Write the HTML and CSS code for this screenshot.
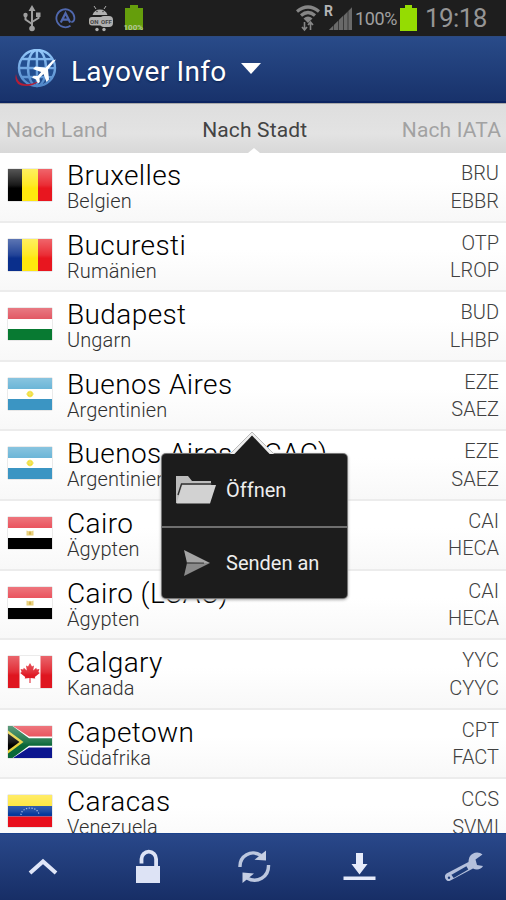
FILE: index.html
```
<!DOCTYPE html>
<html lang="de">
<head>
<meta charset="utf-8">
<title>Layover Info</title>
<link rel="stylesheet" href="styles.css">
</head>
<body>
<svg class="defs" width="0" height="0">
  <defs>
    <linearGradient id="gloss" x1="0" y1="0" x2="0" y2="1">
      <stop offset="0" stop-color="#fff" stop-opacity=".34"/>
      <stop offset=".5" stop-color="#fff" stop-opacity=".1"/>
      <stop offset=".6" stop-color="#fff" stop-opacity="0"/>
    </linearGradient>
    <linearGradient id="globe" x1="0" y1="0" x2="0" y2="1">
      <stop offset="0" stop-color="#94c8fa"/><stop offset="1" stop-color="#4f86c8"/>
    </linearGradient>
    <symbol id="be" viewBox="0 0 44 32"><path fill="#000" d="M0 0h15v32H0z"/><path fill="#ffe70d" d="M14 0h16v32H14z"/><path fill="#e8161f" d="M30 0h14v32H30z"/></symbol>
    <symbol id="ro" viewBox="0 0 44 32"><path fill="#0a2f8c" d="M0 0h15v32H0z"/><path fill="#ffe70d" d="M14 0h16v32H14z"/><path fill="#e8161f" d="M30 0h14v32H30z"/></symbol>
    <symbol id="hu" viewBox="0 0 44 32"><path fill="#fff" d="M0 0h44v32H0z"/><path fill="#dc3543" d="M0 0h44v11H0z"/><path fill="#087a32" d="M0 21h44v11H0z"/></symbol>
    <symbol id="ar" viewBox="0 0 44 32"><path fill="#fff" d="M0 0h44v32H0z"/><path fill="#4ca6cf" d="M0 0h44v11H0z"/><path fill="#3b95c3" d="M0 21h44v11H0z"/><circle cx="22" cy="16" r="3" fill="#f0dc18"/><path stroke="#eee06a" d="M18 16h8M22 12.500v7"/></symbol>
    <symbol id="eg" viewBox="0 0 44 32"><path fill="#fff" d="M0 0h44v32H0z"/><path fill="#e52f3b" d="M0 0h44v11H0z"/><path d="M0 21h44v11H0z"/><path fill="#e6cc72" d="M18.500 13.500l3 1 .5-1 .5 1 3-1v5h-7z"/><path fill="#cda93a" d="M21 14.500h2v3h-2z"/></symbol>
    <symbol id="ca" viewBox="0 0 44 32"><path fill="#fff" d="M0 0h44v32H0z"/><path fill="#df1620" d="M0 0h11.500v32H0zM32.500 0H44v32H32.500z"/><path fill="#e01b26" d="M22 7l2 3.500 2-1-.8 5 3-2.700.6 1.700 2.600-.4-1 3 1.400.9-5 4 .5 1.500-4.800-.6V27h-1v-5.100l-4.800.6.5-1.500-5-4 1.400-.9-1-3 2.600.4.600-1.700 3 2.700-.8-5 2 1z"/></symbol>
    <symbol id="za" viewBox="0 0 44 32"><path fill="#fff" d="M0 0h44v32H0z"/><path fill="#e5303b" d="M5 0h39v10.500H21z"/><path fill="#0c168f" d="M5 32h39V21.500H21z"/><path fill="#0a6838" d="M0 0h4.500L21 12.300h23v7.400H21L4.500 32H0z"/><path fill="#e8d23c" d="M0 4.500L15.500 16 0 27.500z"/><path d="M0 7.500L11.500 16 0 24.500z"/></symbol>
    <symbol id="ve" viewBox="0 0 44 32"><path fill="#ffe21c" d="M0 0h44v11H0z"/><path fill="#073a9c" d="M0 11h44v10.500H0z"/><path fill="#e80f1c" d="M0 21.500h44V32H0z"/><path d="M13 20a9 7 0 0 1 18 0" fill="none" stroke="#9fb4e0" stroke-width="1.200" stroke-dasharray="1.300 1.500"/></symbol>
    <symbol id="shine" viewBox="0 0 44 32"><path fill="url(#gloss)" d="M0 0h44v32H0z"/></symbol>
  </defs>
</svg>
<div class="phone">
  <div class="status">
    <div class="status-left">
      <svg width="18" height="27" viewBox="0 0 18 27" fill="none" stroke="#a0a0a0" stroke-width="2"><path d="M9 4v19M2.500 10v4.500L9 19M15.500 10v3L9 17"/><path fill="#a0a0a0" stroke="none" d="M9 0l3.500 6h-7zM13 7.500h4.500V12H13z"/><circle cx="2.500" cy="10" r="2.200" fill="#a0a0a0" stroke="none"/><circle cx="9" cy="23.500" r="2.800" fill="#a0a0a0" stroke="none"/></svg>
      <svg class="at" width="21" height="21" viewBox="0 0 21 21" fill="none" stroke="#5068ae" stroke-width="1.800"><path d="M15.500 17.700A9 9 0 1 1 19.300 9q.5 5-3 5"/><path stroke-width="2.200" d="M5.800 14.500l4.700-9.300 4.700 9.300M7.500 11.700h6"/></svg>
      <svg class="droid" width="25" height="27" viewBox="0 0 25 27"><g fill="#b0b0b0"><path d="M3.500 10a8 8.500 0 0 1 15 0z"/><path d="M5 1l2 3M17 1l-2 3" stroke="#b0b0b0"/><rect y="12" width="15" height="8.500" rx="3"/><rect x="11" y="11" width="13" height="11" rx="4"/><circle cx="8" cy="24.500" r="1.700"/><circle cx="15" cy="24.500" r="1.700"/></g><circle cx="8" cy="6.500" r=".8" fill="#444"/><circle cx="14" cy="6.500" r=".8" fill="#444"/><text x="1" y="19" class="tiny-dark">ON</text><text x="12" y="18.500" class="tiny-dark">OFF</text></svg>
      <svg class="batt" width="22" height="27" viewBox="0 0 22 27"><path fill="#659e0c" d="M7 0h8v3h5v22H2V3h5z"/><text x="0.500" y="25" class="tiny-light">100%</text></svg>
    </div>
    <div class="status-right">
      <svg class="wifi" width="24" height="27" viewBox="0 0 24 27" fill="none" stroke="#868686" stroke-width="3.200"><path d="M1 6.500q11-9 22 0M5 10.500q7-6 14 0"/><path stroke="none" fill="#868686" d="M7.500 13.500q4.500-4 9 0L12 18z"/><path stroke-width="1.600" d="M8.500 17v8M6 22l2.500 3 2.500-3M14.500 25v-8M12 20l2.500-3 2.500 3"/></svg>
      <svg class="signal" width="29" height="26" viewBox="0 0 29 26"><text x="0" y="11" class="roam">R</text><path fill="#7c7c7c" d="M5 25l4-4v4zM10 20l4-4v9h-4zM15 15l4-4v14h-4zM20 10.500l3.500-3.500v18H20zM24.500 6L28 2.500V25h-3.500z"/><path fill="#555" d="M5 25L28 2v23z" opacity=".5"/></svg>
      <span class="pct">100%</span>
      <svg class="full" width="17" height="26" viewBox="0 0 17 26"><path fill="#95dc02" d="M5 0h7v3h5v23H0V3h5z"/></svg>
      <span class="clock">19:18</span>
    </div>
  </div>
  <div class="titlebar">
    <svg class="logo" width="44" height="40" viewBox="0 0 44 40"><g fill="none" stroke="url(#globe)" stroke-width="2.400"><circle cx="23" cy="19" r="18" fill="#234f91"/><ellipse cx="23" cy="19" rx="9" ry="18"/><path d="M22.900 1L23 37M5 19L41 19.100M8 10L38 10.100M8 28L38 28.100"/></g><path d="M2 25q-3 12 10 12 8 0 13-5-9 4-15 3-7-1-8-10z" fill="#b51d36"/><path fill="#fff" d="M42 10.500l-8 10 1 10-2.500 2.500-3-8-4 4 .3 4-1.800 1.500-2-4-4-2 1.700-1.800 4 .3 3.500-4-8.200-3 2.500-2.600 10 1.300 7-7.200z"/></svg>
    <span class="apptitle">Layover Info</span>
    <svg class="caret" width="20" height="11" viewBox="0 0 20 11"><path fill="#fff" d="M0 0h20L10 11z"/></svg>
  </div>
  <div class="tabs"><span>Nach Land</span><span class="active">Nach Stadt</span><span>Nach IATA</span></div>
  <div class="list">
    <div class="row"><svg class="flag"><use href="#be"/><use href="#shine"/></svg><div class="place"><b>Bruxelles</b><i>Belgien</i></div><div class="codes"><span>BRU</span><span>EBBR</span></div></div>
    <div class="row"><svg class="flag"><use href="#ro"/><use href="#shine"/></svg><div class="place"><b>Bucuresti</b><i>Rumänien</i></div><div class="codes"><span>OTP</span><span>LROP</span></div></div>
    <div class="row"><svg class="flag"><use href="#hu"/><use href="#shine"/></svg><div class="place"><b>Budapest</b><i>Ungarn</i></div><div class="codes"><span>BUD</span><span>LHBP</span></div></div>
    <div class="row"><svg class="flag"><use href="#ar"/><use href="#shine"/></svg><div class="place"><b>Buenos Aires</b><i>Argentinien</i></div><div class="codes"><span>EZE</span><span>SAEZ</span></div></div>
    <div class="row"><svg class="flag"><use href="#ar"/><use href="#shine"/></svg><div class="place"><b>Buenos Aires (LCAC)</b><i>Argentinien</i></div><div class="codes"><span>EZE</span><span>SAEZ</span></div></div>
    <div class="row"><svg class="flag"><use href="#eg"/><use href="#shine"/></svg><div class="place"><b>Cairo</b><i>Ägypten</i></div><div class="codes"><span>CAI</span><span>HECA</span></div></div>
    <div class="row"><svg class="flag"><use href="#eg"/><use href="#shine"/></svg><div class="place"><b>Cairo (LCAC)</b><i>Ägypten</i></div><div class="codes"><span>CAI</span><span>HECA</span></div></div>
    <div class="row"><svg class="flag"><use href="#ca"/><use href="#shine"/></svg><div class="place"><b>Calgary</b><i>Kanada</i></div><div class="codes"><span>YYC</span><span>CYYC</span></div></div>
    <div class="row"><svg class="flag"><use href="#za"/><use href="#shine"/></svg><div class="place"><b>Capetown</b><i>Südafrika</i></div><div class="codes"><span>CPT</span><span>FACT</span></div></div>
    <div class="row"><svg class="flag"><use href="#ve"/><use href="#shine"/></svg><div class="place"><b>Caracas</b><i>Venezuela</i></div><div class="codes"><span>CCS</span><span>SVMI</span></div></div>
  </div>
  <div class="toolbar">
    <div><svg width="30" height="36" viewBox="0 0 30 36"><path d="M2 24l13-11.500L28 24" fill="none" stroke="#e0e6f8" stroke-width="4"/></svg></div>
    <div><svg width="30" height="36" viewBox="0 0 30 36"><path fill="#dde3f5" d="M3 17h24v17H3z"/><path d="M8.500 14.500V10a7.300 7.300 0 0 1 14.600 0V17" fill="none" stroke="#dde3f5" stroke-width="3.800"/></svg></div>
    <div><svg width="34" height="36" viewBox="0 0 34 36"><g fill="none" stroke="#bcc7df" stroke-width="3.400"><path d="M3 18C2.500 7 14 0 24 6.500"/><path d="M31.500 16C32 28 20 35 10 29"/></g><path fill="#c6cfe4" d="M29 1.500V11.500L17.500 10.800zM5.500 34V23.500L17 24.500z"/></svg></div>
    <div><svg width="34" height="36" viewBox="0 0 34 36"><path fill="#e6ebfa" d="M14 4h7v11h4.500l-8 10.500-8-10.500H14zM1.500 27.500h32V31h-32z"/></svg></div>
    <div><svg width="40" height="36" viewBox="0 0 40 36"><path d="M38.500 5.500C35 2 28 3 25.500 8c-1 2.500-1 5-1 5L2.500 24.500C-1 27 2 33 5.500 32L29 19.500c3.500 2 8.500 1 10-2.500l-6-1-1.500-5.500z" fill="#b4c0dc"/><path d="M9 26.200L22 18.800l.8 1.400L10 27.500z" fill="#1d3b78" stroke="#1d3b78" stroke-width="2.200"/><circle cx="5" cy="28.700" r="1.200" fill="#1d3b78"/></svg></div>
  </div>
  <div class="popup">
    <svg class="pointer" width="44" height="26" viewBox="0 0 44 26"><path d="M0 24L22 2l22 22" fill="#eee" stroke="#bbb" stroke-width="1"/><path fill="#1c1c1c" d="M2.500 26L22 5.500l19.500 20.500z"/></svg>
    <div class="item"><svg width="42" height="30" viewBox="0 0 42 30"><path fill="#bdbdbd" d="M1 1h12l4 5h19v5L32 28H1z"/><path d="M3 20L6.500 9H37" fill="none" stroke="#303030" stroke-width="1.400"/><path fill="#d2d2d2" d="M7.500 10H41l-6 18.500H1.500z"/></svg><span>Öffnen</span></div>
    <div class="item"><svg width="42" height="30" viewBox="0 0 42 30"><path fill="#a5a5a5" d="M9 2l26 13H12z"/><path fill="#8a8a8a" d="M12 15h23L9 28z"/><path stroke="#444" stroke-width="1.400" d="M12 15l17 .1"/></svg><span>Senden an</span></div>
  </div>
</div>
</body>
</html>
```
FILE: styles.css
```
* { box-sizing: border-box; }
body { margin: 0; font-family: Roboto, "Noto Sans", sans-serif; }
svg { display: block; flex: none; }
.defs { position: absolute; }
.phone { position: relative; width: 506px; height: 900px; display: flex; flex-direction: column; overflow: hidden; background: #fff; }

.status { height: 36px; flex: none; display: flex; justify-content: space-between; background: #1e1e1e; padding: 5px 19px 0 23px; }
.status-left, .status-right { display: flex; }
.at { margin: 3px 0 0 14px; }
.droid { margin-left: 13px; }
.batt { margin-left: 9px; }
.tiny-dark { font: 700 6px Roboto, sans-serif; fill: #444; }
.tiny-light { font: 700 8px Roboto, sans-serif; fill: #b5c79a; }
.roam { font: 700 14px Roboto, sans-serif; fill: #b5b5b5; }
.signal { margin-left: 4px; overflow: visible; }
.pct { font-size: 18px; line-height: 27px; color: #a0a0a0; margin-left: 2px; width: 43px; letter-spacing: -.4px; white-space: nowrap; }
.full { margin-left: 2px; }
.clock { font-size: 26px; line-height: 26px; color: #959595; margin-left: 8px; width: 62px; letter-spacing: -.6px; white-space: nowrap; }

.titlebar { height: 67px; flex: none; display: flex; align-items: flex-start; padding: 12px 0 0 14px; background: linear-gradient(#294b89, #18326b); border-top: 1px solid #2c4a80; border-bottom: 2px solid #0c2461; }
.apptitle { margin: 5px 0 0 13px; width: 156px; font-size: 28px; line-height: 36px; letter-spacing: .25px; color: #fff; text-shadow: 0 1px 2px #0b204d; white-space: nowrap; }
.caret { margin: 14px 0 0 14px; }

.tabs { position: relative; height: 50px; flex: none; display: flex; justify-content: space-between; padding: 3px 5px 0 6px; background: linear-gradient(#dedede, #e3e3e3 60%, #d8d8d8); border-top: 1px solid #aaa; font-size: 21px; line-height: 47px; letter-spacing: .15px; color: #a2a2a2; }
.tabs .active { color: #444; }
.tabs::after { content: ""; position: absolute; left: 248px; bottom: 0; border: 6px solid transparent; border-top: 0; border-bottom: 5px solid #fff; }

.list { flex: 1; min-height: 0; overflow: hidden; }
.row { height: 69.600px; display: flex; padding: 0 7px 0 8px; background: linear-gradient(#fff 40%, #f8f8f8); border-bottom: 2px solid #ececec; }
.flag { width: 44px; height: 32px; margin-top: 16px; box-shadow: 0 0 1px #888; }
.place { margin: 7px 0 0 15px; flex: 1; display: flex; flex-direction: column; white-space: nowrap; }
.place b { font-weight: 300; font-size: 28px; line-height: 31px; letter-spacing: .4px; color: #000; }
.place i { font-style: normal; font-weight: 300; font-size: 20px; line-height: 20px; letter-spacing: .1px; color: #303030; }
.codes { display: flex; flex-direction: column; text-align: right; font-size: 20px; line-height: 27.500px; padding-top: 7px; color: #404040; font-weight: 300; }

.toolbar { height: 67px; flex: none; display: flex; justify-content: space-between; padding: 15px 20px 0 21px; background: linear-gradient(#29488a, #172e66); border-top: 1px solid #1b428c; }
.toolbar div { width: 44px; display: flex; justify-content: center; }

.popup { position: absolute; left: 162px; top: 454px; width: 185px; height: 144px; border-radius: 4px; background: #1c1c1c; box-shadow: 0 0 0 1px #777, 0 1px 3px 1px #aaa; }
.pointer { position: absolute; left: 68px; top: -24px; }
.item { height: 72px; display: flex; align-items: center; padding-left: 13px; color: #eee; font-size: 20px; }
.item span { margin-left: 9px; }
.item + .item { border-top: 2px solid #6e6e6e; }
```
